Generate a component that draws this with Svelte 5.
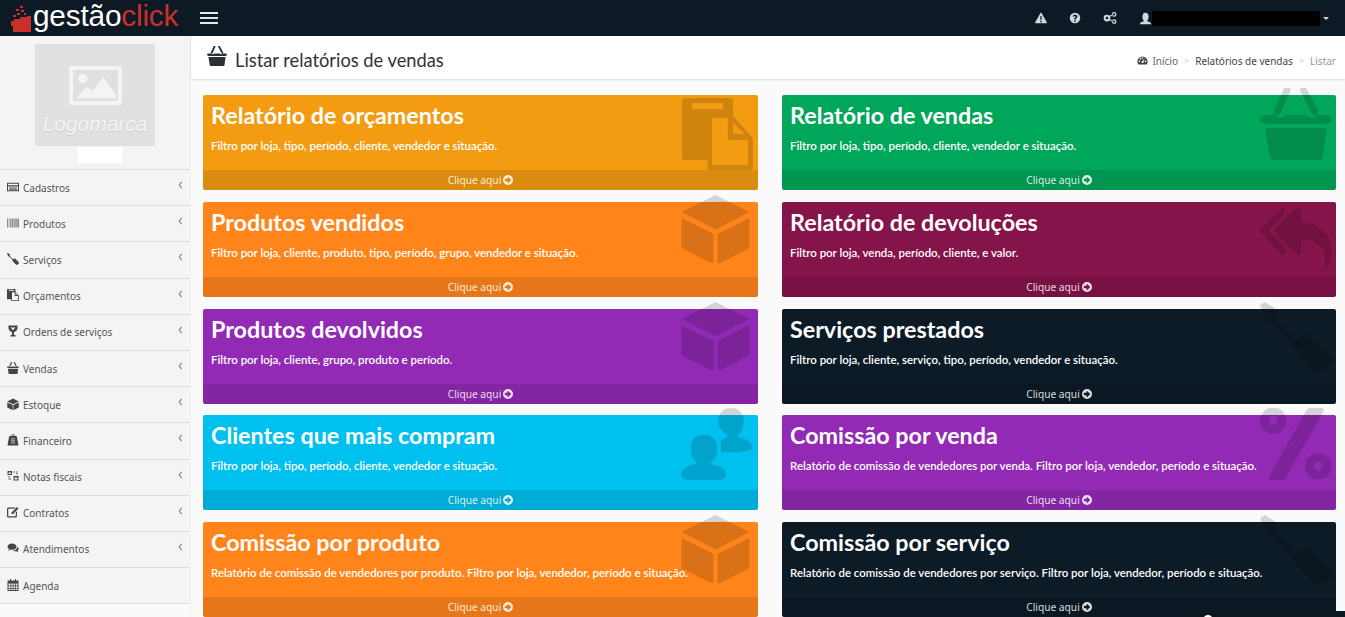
<script>
  const menu = [
    ['Cadastros', 'card', true], ['Produtos', 'barcode', true], ['Serviços', 'driver', true],
    ['Orçamentos', 'docs', true], ['Ordens de serviços', 'trophy', true], ['Vendas', 'basket', true],
    ['Estoque', 'cube', true], ['Financeiro', 'weight', true], ['Notas fiscais', 'nodes', true],
    ['Contratos', 'edit', true], ['Atendimentos', 'chat', true], ['Agenda', 'cal', false]
  ];
  const left = [
    ['Relatório de orçamentos', 'Filtro por loja, tipo, período, cliente, vendedor e situação.', 'orange', 'docs'],
    ['Produtos vendidos', 'Filtro por loja, cliente, produto, tipo, período, grupo, vendedor e situação.', 'amber', 'cube'],
    ['Produtos devolvidos', 'Filtro por loja, cliente, grupo, produto e período.', 'purple', 'cube'],
    ['Clientes que mais compram', 'Filtro por loja, tipo, período, cliente, vendedor e situação.', 'sky', 'users'],
    ['Comissão por produto', 'Relatório de comissão de vendedores por produto. Filtro por loja, vendedor, período e situação.', 'amber', 'cube']
  ];
  const right = [
    ['Relatório de vendas', 'Filtro por loja, tipo, período, cliente, vendedor e situação.', 'green', 'basket'],
    ['Relatório de devoluções', 'Filtro por loja, venda, período, cliente, e valor.', 'wine', 'replyall'],
    ['Serviços prestados', 'Filtro por loja, cliente, serviço, tipo, período, vendedor e situação.', 'navy', 'driver'],
    ['Comissão por venda', 'Relatório de comissão de vendedores por venda. Filtro por loja, vendedor, período e situação.', 'purple', 'percent'],
    ['Comissão por serviço', 'Relatório de comissão de vendedores por serviço. Filtro por loja, vendedor, período e situação.', 'navy', 'driver']
  ];
</script>

{#snippet icon(name)}
  <svg viewBox="0 0 24 24" fill="currentColor" aria-hidden="true">
    {#if name === 'card'}
      <path fill-rule="evenodd" d="M0 3.500h24v17H0zM2 5.500v3h20v-3zM2 11v7.500h20V11zM4 13h16v2H4zM4 16h16v1.500H4z"/>
    {:else if name === 'barcode'}
      <path d="M0 3h2v18H0zM3.500 3h1.500v18H3.500zM6.500 3h2.500v18H6.500zM10 3h3v18h-3zM14 3h1.500v18H14zM16.500 3h3v18h-3zM20.500 3H24v18h-3.500z" opacity=".6"/>
    {:else if name === 'driver'}
      <path d="M0 1.100L1.700 0 6 2.800 5 5.500l-.1.100 8.600 8.300-1.300 1.200L4 6.800l-1.800-1z"/>
      <path d="M10.500 14.500L15 10.300l2.200 1.900 6.100 5.600.6 2.800L21 23.300h-2.700l-5-5z"/>
    {:else if name === 'docs'}
      <path fill-rule="evenodd" d="M1 0h15a1 1 0 0 1 1 1v5l6.300 7c.3.300.4.600.4 1v9a1 1 0 0 1-1 1H9.500a1 1 0 0 1-1-1v-2.300H1a1 1 0 0 1-1-1V1a1 1 0 0 1 1-1zM3.300 1.700v2h10.400v-2zM10 6.700v15.600h12V14h-5.700a1 1 0 0 1-1-1V6.700zM17 8.300V12h4z"/>
    {:else if name === 'trophy'}
      <path fill-rule="evenodd" d="M3 1h18v5c0 4-3 7-7 7.800V20h3v3H7v-3h3v-6.200C6 13 3 10 3 6zM8 4c0 2 1 4 4 6.500C15 8 16 6 16 4c-1.500 0-3 .6-4 2-1-1.400-2.500-2-4-2z"/>
    {:else if name === 'basket'}
      <path d="M9 .7L5.700 8M14.500 .7L18.300 8" fill="none" stroke="currentColor" stroke-width="2.300" stroke-linecap="round"/>
      <path d="M3 9h2c1 1.300 2.800 1.300 3.800 0h6.400c1 1.300 2.800 1.300 3.800 0h2c1.900 0 3 .7 3 1.500S22.900 12 21 12H3c-1.900 0-3-.7-3-1.500S1.100 9 3 9z"/>
      <path d="M1.700 13.300h20.600L21 22.800c-.1.700-.6 1.200-1.200 1.200H4.500c-.6 0-1.100-.5-1.200-1.200z"/>
    {:else if name === 'cube'}
      <path d="M12 1l11.500 5.800L12 12.700.5 6.800z"/>
      <path d="M.5 8.800L11.300 14.200V24.500L.5 19zM23.500 8.800V19L12.700 24.500V14.200z"/>
    {:else if name === 'weight'}
      <path fill-rule="evenodd" d="M9 1h6v3h3c1 0 1.600.6 1.800 1.500L23 23H1L4.200 5.500C4.400 4.600 5 4 6 4h3zM10.500 2.500V4h3V2.500zM8 9v1.500h8V9zM8 13v1.500h8V13zM8 17v1.500h8V17z"/>
    {:else if name === 'nodes'}
      <path fill-rule="evenodd" d="M1 2h9v8H1zM3 5v3h5V5zM13 12h10v9H13zM15 15v4h6v-4zM13 3h3v2h-3zM18 3h3v2h-3zM19 6h2v3h-2zM3 12h2v3H3zM3 17h5v2H3z"/>
    {:else if name === 'edit'}
      <path d="M3 3h14l-2.500 2.500H3.500a1 1 0 0 0-1 1v13a1 1 0 0 0 1 1h13a1 1 0 0 0 1-1V13l2.500-2.500V20a3 3 0 0 1-3 3H3a3 3 0 0 1-3-3V6a3 3 0 0 1 3-3zM20 2l3 3-11 11H9v-3z"/>
    {:else if name === 'chat'}
      <path d="M10 3c5 0 9 2.800 9 6.300s-4 6.200-9 6.200c-1 0-1.800-.1-2.600-.3-1.300 1-3 1.800-5.400 2 1.100-1 2-2.300 2.200-3.500C2 12.500 1 11 1 9.300 1 5.800 5 3 10 3z"/>
      <path d="M20.500 9.500c1.800 1 2.900 2.500 2.900 4.200 0 1.400-.8 2.700-2.100 3.700.2 1 1 2 1.700 2.600-1.800-.1-3.300-.8-4.300-1.700-3 .7-6 0-8-1.300 5 .5 10-2 9.800-7.500z"/>
    {:else if name === 'cal'}
      <path fill-rule="evenodd" d="M6 0h2v3h8V0h2v3h4a1 1 0 0 1 1 1v19a1 1 0 0 1-1 1H2a1 1 0 0 1-1-1V4a1 1 0 0 1 1-1h4zM3 9v4h4V9zm5.500 0v4h3V9zM13 9v4h3V9zm4.500 0v4H21V9zM3 14.500V18h4v-3.500zm5.500 0V18h3v-3.500zm4.500 0V18h3v-3.500zm4.500 0V18H21v-3.500zM3 19.500V22h4v-2.500zm5.500 0V22h3v-2.500zm4.500 0V22h3v-2.500zm4.500 0V22H21v-2.500z"/>
    {:else if name === 'users'}
      <path d="M7.600 8.900c3 0 4.500 1.800 4.500 4.600 0 2.200-.9 3.600-2 4.500v.7c2.500.5 5 1.500 5 3.700 0 1.300-3 2.100-7.500 2.100S0 23.800 0 22.500c0-2.200 2.500-3.200 5-3.800V18c-1-.9-1.700-2.300-1.700-4.500 0-2.800 1.300-4.600 4.300-4.600z"/>
      <path d="M16.600 0c3 0 4.300 1.800 4.300 4.500 0 2.200-.9 3.600-2 4.500v.8c2.500.4 5 1.500 5 3.400 0 1.300-4 1.600-10.600 1.600v-4.200c.5-.3 1.500-.6 2-.8V9c-1-.9-2.900-2.300-2.900-4.500C12.400 1.800 14 0 16.600 0z"/>
    {:else if name === 'replyall'}
      <path d="M7.200 2.200c.5-.4 1-.2 1.300.4.100.3 0 .6-.2.9L2.800 9.400l5.500 5.900c.3.300.4.600.2.800-.2.800-.8 1.600-1.300 1.300L.3 10.100c-.4-.4-.4-1 0-1.400z"/>
      <path d="M12.200 2.200c.7-.4 1.500 0 1.500.8v3.700c6 .4 10.200 3.900 10.200 9.400 0 3-1.100 5.600-2.600 7.200.8-3.500 1.500-10.300-7.600-11.100V16.500c0 .8-.8 1.300-1.500.9L5.300 10.100c-.4-.4-.4-1 0-1.400z"/>
    {:else if name === 'percent'}
      <path fill-rule="evenodd" d="M4.400 -.2a4.400 4.400 0 1 1 0 8.800 4.400 4.400 0 0 1 0-8.800zm0 2.900a1.500 1.500 0 1 0 0 3 1.500 1.500 0 0 0 0-3zM19.400 15a4.400 4.400 0 1 1 0 8.800 4.400 4.400 0 0 1 0-8.800zm0 2.900a1.500 1.500 0 1 0 0 3 1.500 1.500 0 0 0 0-3z"/>
      <path d="M17 0h3.500c.6 0 1 .6.7 1.200L8.800 22.800c-.4.800-1.100 1.200-1.900 1.200H3.800c-.6 0-1-.6-.7-1.200L15.300 1c.3-.6.900-1 1.700-1z"/>
    {/if}
  </svg>
{/snippet}

{#snippet box(item)}
  <article class="box {item[2]}">
    <h3>{item[0]}</h3>
    <p>{item[1]}</p>
    <span class="big {item[3]}">{@render icon(item[3])}</span>
    <div class="more">Clique aqui
      <svg viewBox="0 0 16 16" aria-hidden="true"><path fill="currentColor" fill-rule="evenodd" d="M8 0a8 8 0 1 1 0 16A8 8 0 0 1 8 0zM8.200 3L6.600 4.600 8 6H3v4h5L6.600 11.400 8.200 13l5-5z"/></svg>
    </div>
  </article>
{/snippet}

<div class="page">
  <header class="top">
    <div class="brand">
      <svg class="mark" viewBox="0 0 20 26" aria-hidden="true">
        <path fill="#c9302c" d="M0 15h3v-2h6v-2h7v-1h4v16H2V20H0z"/>
        <path fill="#c9302c" d="M9 0h3v2H9zM5 3h3v2H5zM10 4h3v2h-3zM6 7h3v2H6zM13 7h2v2h-2zM2 9h3v2H2z"/>
      </svg>
      <span class="word">gestão<em>click</em></span>
    </div>
    <div class="burger" aria-label="Menu"><i></i><i></i><i></i></div>
    <div class="tools">
      <svg viewBox="0 0 16 16" aria-hidden="true"><path fill="currentColor" fill-rule="evenodd" d="M8 1c.4 0 .7.200.9.500l6.800 12c.3.600-.1 1.500-.9 1.500H1.200c-.8 0-1.200-.9-.9-1.500l6.800-12C7.300 1.200 7.600 1 8 1zM7 5.500l.3 5h1.400l.3-5zM7 11.500v2h2v-2z"/></svg>
      <svg viewBox="0 0 16 16" aria-hidden="true"><path fill="currentColor" fill-rule="evenodd" d="M8 1a7 7 0 1 1 0 14A7 7 0 0 1 8 1zM7 11v2h2v-2zM8 3.500C6.300 3.500 5.200 4.400 5 6l1.800.3c.1-.7.500-1.100 1.200-1.100.6 0 1 .4 1 .9 0 .4-.2.700-.8 1.100C7.300 7.800 7 8.300 7 9.500v.5h2v-.3c0-.6.200-.9.900-1.300.8-.6 1.300-1.300 1.300-2.400 0-1.600-1.300-2.500-3.200-2.500z"/></svg>
      <svg class="share" viewBox="0 0 18 16" aria-hidden="true"><path fill="currentColor" fill-rule="evenodd" d="M5 3.500a4.500 4.500 0 1 1 0 9 4.500 4.500 0 0 1 0-9zm0 2.700a1.800 1.800 0 1 0 0 3.600 1.800 1.800 0 0 0 0-3.600zM14.500 0a3.200 3.200 0 1 1 0 6.400 3.200 3.200 0 0 1 0-6.400zm0 1.800a1.400 1.400 0 1 0 0 2.800 1.400 1.400 0 0 0 0-2.800zM14.500 9.600a3.200 3.200 0 1 1 0 6.400 3.200 3.200 0 0 1 0-6.400zm0 1.800a1.400 1.400 0 1 0 0 2.800 1.400 1.400 0 0 0 0-2.800zM8.500 5l3.500-2 .7 1.400-3.500 2zM8.500 11l.7-1.400 3.500 2-.7 1.400z"/></svg>
      <div class="user">
        <svg viewBox="0 0 16 16" aria-hidden="true"><path fill="currentColor" d="M1 15c0-2 1.500-2.700 4.800-3.600v-1.200C4.700 9.200 4.200 8 4.200 6c0-3 1.300-5 3.800-5s3.800 2 3.800 5c0 2-.5 3.200-1.600 4.200v1.200C13.500 12.300 15 13 15 15z"/></svg>
        <span class="redact"></span>
        <i class="caret"></i>
      </div>
    </div>
  </header>

  <div class="body">
    <aside class="side">
      <div class="logoarea">
        <div class="logo">
          <svg viewBox="0 0 54 40" aria-hidden="true">
            <path fill="#f4f4f4" fill-rule="evenodd" d="M2 0h50a2 2 0 0 1 2 2v36a2 2 0 0 1-2 2H2a2 2 0 0 1-2-2V2a2 2 0 0 1 2-2zM4 4v32h46V4z"/>
            <circle cx="14" cy="13" r="5" fill="#f4f4f4"/>
            <path fill="#f4f4f4" d="M7 33l11-12 6 5 11-15 13 19v3H7z"/>
          </svg>
          <span>Logomarca</span>
        </div>
        <div class="whitebox"></div>
      </div>
      <nav>
        {#each menu as m}
          <a class="item" href="#top">
            <span class="ico {m[1]}">{@render icon(m[1])}</span>
            <span class="lbl">{m[0]}</span>
            {#if m[2]}
              <svg class="chev" viewBox="0 0 6 10" aria-hidden="true"><path d="M4.500 1L1.500 5l3 4" fill="none" stroke="currentColor" stroke-width="1.300"/></svg>
            {/if}
          </a>
        {/each}
      </nav>
    </aside>

    <main class="main">
      <div class="head">
        <div class="title">
          <span class="hico">{@render icon('basket')}</span>
          <h1>Listar relatórios de vendas</h1>
        </div>
        <ol class="crumb">
          <li class="home">
            <svg viewBox="0 0 16 16" aria-hidden="true"><path fill="currentColor" fill-rule="evenodd" d="M8 2a7.500 7.500 0 0 1 7.500 7.500c0 1.600-.5 3-1.300 4.300H1.800C1 12.500.5 11.100.5 9.500A7.500 7.500 0 0 1 8 2zM3.500 8a1.200 1.200 0 1 0 0 2.400 1.200 1.200 0 0 0 0-2.400zM5 4.500a1.200 1.200 0 1 0 0 2.400 1.200 1.200 0 0 0 0-2.400zM8 3.200a1.200 1.200 0 1 0 0 2.400 1.200 1.200 0 0 0 0-2.400zM11.500 4.500L8.300 8.600a1.500 1.500 0 1 0 1.300 1zM12.500 8a1.200 1.200 0 1 0 0 2.400 1.200 1.200 0 0 0 0-2.400z"/></svg>
            Início
          </li>
          <li class="sep">&gt;</li>
          <li>Relatórios de vendas</li>
          <li class="sep">&gt;</li>
          <li class="last">Listar</li>
        </ol>
      </div>
      <div class="grid">
        <div class="col">{#each left as b}{@render box(b)}{/each}</div>
        <div class="col">{#each right as b}{@render box(b)}{/each}</div>
      </div>
    </main>
  </div>
  <div class="floater"><i></i></div>
</div>

<style>
  :global(html), :global(body) { margin: 0; height: 100%; overflow: hidden; }
  :global(body) { font-family: "Lato", "Open Sans", sans-serif; background: #fafafa; }
  .page { height: 617px; overflow: hidden; position: relative; display: flex; flex-direction: column; }
  .top { height: 36px; flex: none; background: #0d1a26; display: flex; align-items: center; color: #fff; }
  .brand { width: 190px; display: flex; align-items: center; padding-left: 11px; box-sizing: border-box; height: 36px; }
  .mark { width: 20px; height: 26px; flex: none; margin-top: 1px; }
  .word { font-family: "Liberation Sans", sans-serif; font-size: 29.800px; letter-spacing: -0.2px; line-height: 30px; margin-left: 2px; margin-bottom: 4px; white-space: nowrap; }
  .word em { font-style: normal; color: #c9302c; }
  .burger { display: flex; flex-direction: column; gap: 3px; width: 18px; margin-left: 10px; }
  .burger i { height: 2px; background: #e6e6e6; display: block; }
  .tools { margin-left: auto; display: flex; align-items: center; color: #d2d6de; }
  .tools > svg { width: 12px; height: 12px; margin-right: 22px; }
  .tools > svg.share { width: 14px; height: 12px; margin-right: 22px; }
  .user { display: flex; align-items: center; margin-right: 16px; }
  .user svg { width: 13px; height: 13px; }
  .redact { width: 168px; height: 15px; background: #000; display: block; }
  .caret { margin-left: 3px; border: 3.500px solid transparent; border-top-color: #d2d6de; border-bottom: 0; display: block; }

  .body { flex: 1; display: flex; min-height: 0; }
  .side { width: 191px; flex: none; background: #fafafa; border-right: 1px solid #eee; box-sizing: border-box; }
  .logoarea { height: 134px; padding-top: 8px; display: flex; flex-direction: column; align-items: center; box-sizing: border-box; border-bottom: 1px solid #dcdcdc; background: #f4f4f4; }
  .logo { width: 120px; height: 102px; background: #e0e0e0; display: flex; flex-direction: column; align-items: center; }
  .logo svg { width: 53px; height: 39px; margin-top: 22px; }
  .logo span { font-family: "Liberation Sans", sans-serif; font-style: italic; color: #f4f4f4; font-size: 21px; line-height: 24px; margin-top: 7px; text-shadow: 0 1px 1px #ccc; }
  .whitebox { width: 44px; height: 16px; background: #fff; margin: 1px 0 0 10px; }
  .item { display: flex; align-items: center; height: 35.200px; background: #f4f4f4; border-bottom: 1px solid #dcdcdc; color: #444; text-decoration: none; position: relative; padding-left: 7px; font-family: "Noto Sans", sans-serif; font-size: 10px; }
  .ico { width: 12px; height: 12px; display: block; color: #444; margin-top: -2px; }
  .ico svg { width: 12px; height: 12px; display: block; }
  .lbl { margin-left: 4px; color: #555; padding-top: 0; white-space: nowrap; }
  .chev { position: absolute; right: 7px; top: 11px; width: 5px; height: 8px; color: #777; }

  .main { flex: 1; min-width: 0; }
  .head { height: 43px; background: #fff; box-shadow: 0 1px 2px rgba(0,0,0,.12); display: flex; justify-content: space-between; box-sizing: border-box; padding: 0 9px 0 16px; position: relative; }
  .title { display: flex; align-items: center; }
  .hico { width: 20px; height: 20px; color: #2b2f36; display: block; margin-top: -3px; }
  .hico svg { width: 20px; height: 20px; display: block; }
  h1 { font-size: 18.300px; font-weight: 400; color: #333; margin: 4px 0 0 8px; white-space: nowrap; }
  .crumb { list-style: none; display: flex; align-items: center; gap: 5px; margin: 6px 0 0; padding: 0; font-family: "Noto Sans", sans-serif; font-size: 10px; color: #444; }
  .crumb li { white-space: nowrap; }
  .crumb .home { display: flex; align-items: center; gap: 4px; color: #666; }
  .crumb .home svg { width: 11px; height: 11px; color: #444; }
  .crumb .sep { color: #ccc; margin: 0 1px; font-size: 9px; }
  .crumb .last { color: #999; }

  .grid { display: grid; grid-template-columns: 555px 554px; column-gap: 24px; padding: 16px 9px 0 12px; }
  .col { display: flex; flex-direction: column; gap: 11.800px; }
  .box { height: 95px; flex: none; position: relative; border-radius: 2px; color: #fff; display: flex; flex-direction: column; }
  h3 { font-size: 23.300px; font-weight: 700; line-height: 30px; margin: 5px 0 0 8px; white-space: nowrap; }
  p { font-size: 11.450px; line-height: 16px; font-weight: 600; margin: 8px 0 0 8px; white-space: nowrap; position: relative; z-index: 2; }
  .more { margin-top: auto; height: 20px; line-height: 20px; text-align: center; font-size: 10.200px; font-family: "Noto Sans", sans-serif; background: rgba(0,0,0,.1); color: rgba(255,255,255,.85); display: flex; align-items: center; justify-content: center; gap: 2px; border-radius: 0 0 2px 2px; }
  .more svg { width: 10px; height: 10px; }
  .big { position: absolute; right: 4px; top: -7px; width: 72px; height: 72px; color: rgba(0,0,0,.15); display: block; }
  .big svg { width: 100%; height: 100%; display: block; }
  .big.docs { top: 3px; }
  .big.cube { right: 7.500px; top: -10px; width: 71px; height: 71px; }
  .big.users { right: 5px; }
  .big.replyall { top: 0; }
  .orange { background: #f39c12; }
  .amber { background: #ff851b; }
  .purple { background: #932ab6; }
  .sky { background: #00c0ef; }
  .green { background: #00a65a; }
  .wine { background: #85144b; }
  .navy { background: #0d1b27; }
  .floater { position: absolute; left: 1190px; top: 611px; width: 155px; height: 6px; background: #0b1821; }
  .floater i { position: absolute; left: 13px; top: 4px; width: 10px; height: 10px; border-radius: 50%; background: #fff; }
</style>
